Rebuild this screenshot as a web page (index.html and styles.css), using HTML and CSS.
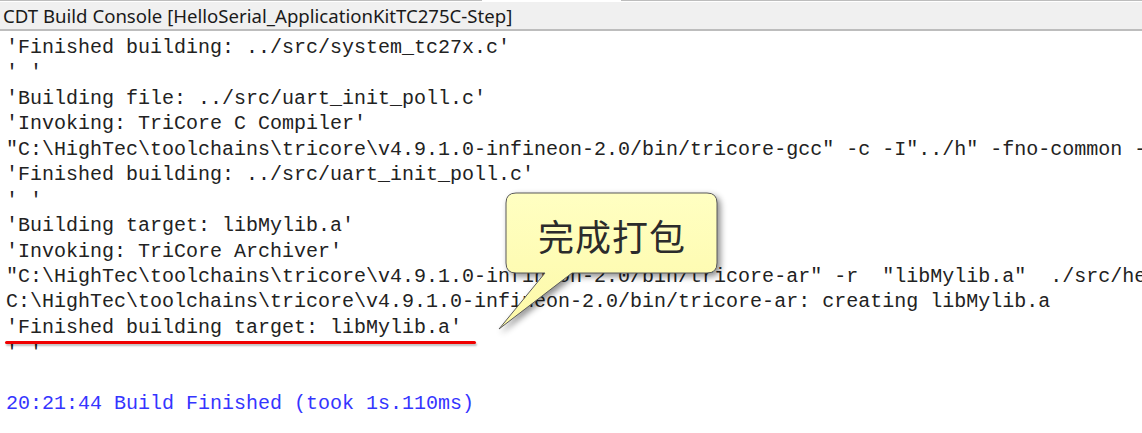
FILE: index.html
```html
<!DOCTYPE html>
<html lang="zh-CN">
<head>
    <meta charset="UTF-8">
    <title>CDT Build Console</title>
    <link rel="stylesheet" href="styles.css">
</head>
<body>
    <div class="view">
        <div class="top-edge">
            <span class="edge-left"></span>
            <span class="edge-gap"></span>
            <span class="edge-right"></span>
        </div>
        <div class="title-bar">CDT Build Console [HelloSerial_ApplicationKitTC275C-Step]</div>

        <!-- console output -->
        <pre class="console">'Finished building: ../src/system_tc27x.c'
' '
'Building file: ../src/uart_init_poll.c'
'Invoking: TriCore C Compiler'
"C:\HighTec\toolchains\tricore\v4.9.1.0-infineon-2.0/bin/tricore-gcc" -c -I"../h" -fno-common -O0 -g3 -W -Wall
'Finished building: ../src/uart_init_poll.c'
' '
'Building target: libMylib.a'
'Invoking: TriCore Archiver'
"C:\HighTec\toolchains\tricore\v4.9.1.0-infineon-2.0/bin/tricore-ar" -r  "libMylib.a"  ./src/hello.o
C:\HighTec\toolchains\tricore\v4.9.1.0-infineon-2.0/bin/tricore-ar: creating libMylib.a
<span class="marked">'Finished building target: libMylib.a'</span>
' '

<span class="done">20:21:44 Build Finished (took 1s.110ms)</span></pre>

        <!-- annotation callout -->
        <div class="callout">
            <svg class="callout-shape" width="240" height="150" viewBox="0 0 240 150">
                <defs>
                    <linearGradient id="fill" x1="0" y1="0" x2="0" y2="1">
                        <stop offset="0" stop-color="#ffffc2"/>
                        <stop offset="1" stop-color="#fdf9a8"/>
                    </linearGradient>
                </defs>
                <path d="M21 8 H212 Q222 8 222 18 V78 Q222 88 212 88 H77 L4 144 L50 88 H21 Q11 88 11 78 V18 Q11 8 21 8 Z"
                      fill="url(#fill)" stroke="#5a5a5a" stroke-width="1"/>
            </svg>
            <span class="callout-text">完成打包</span>
        </div>
    </div>
</body>
</html>
```

FILE: styles.css
```css
* {
    margin: 0;
    padding: 0;
    box-sizing: border-box;
}

body {
    background: #ffffff;
    width: 1142px;
    height: 433px;
    overflow: hidden;
}

.view {
    position: relative;
    width: 1142px;
    height: 433px;
    overflow: hidden;
}

/* thin frame line above the title */
.top-edge {
    display: flex;
    height: 2px;
}

.edge-left {
    width: 482px;
    border-top: 1px solid #bdbdbd;
}

.edge-gap {
    width: 139px;
}

.edge-right {
    flex: 1;
    border-top: 1px solid #bdbdbd;
}

.title-bar {
    height: 29px;
    background: #f0f0f0;
    border-bottom: 2px solid #bdbdbd;
    padding: 1px 0 0 3px;
    font-family: "Noto Sans", "Open Sans", sans-serif;
    font-size: 18.6px;
    line-height: 25px;
    color: #1a1a1a;
    white-space: nowrap;
}

/* Console text */
.console {
    padding: 4px 0 0 6px;
    font-family: "Liberation Mono", "Courier New", monospace;
    font-size: 20px;
    line-height: 25.43px;
    color: #222222;
    white-space: pre;
    overflow: hidden;
}

.marked {
    display: inline-block;
    position: relative;
}

.marked::after {
    content: '';
    position: absolute;
    left: -1px;
    right: -14px;
    bottom: -4px;
    height: 3px;
    border-radius: 2px;
    background: #f00000;
    box-shadow: 1px 2px 2px rgba(0, 0, 0, 0.25);
}

.done {
    color: #3535ff;
}

/* Callout bubble */
.callout {
    position: absolute;
    left: 495px;
    top: 185px;
    width: 240px;
    height: 150px;
}

.callout-shape {
    position: absolute;
    left: 0;
    top: 0;
    filter: drop-shadow(3px 3px 3px rgba(0, 0, 0, 0.45));
}

.callout-text {
    position: absolute;
    left: 43px;
    top: 28px;
    font-family: "Noto Sans CJK SC", sans-serif;
    font-size: 36px;
    line-height: 44px;
    color: #2b2b2b;
    letter-spacing: 1px;
}
```
